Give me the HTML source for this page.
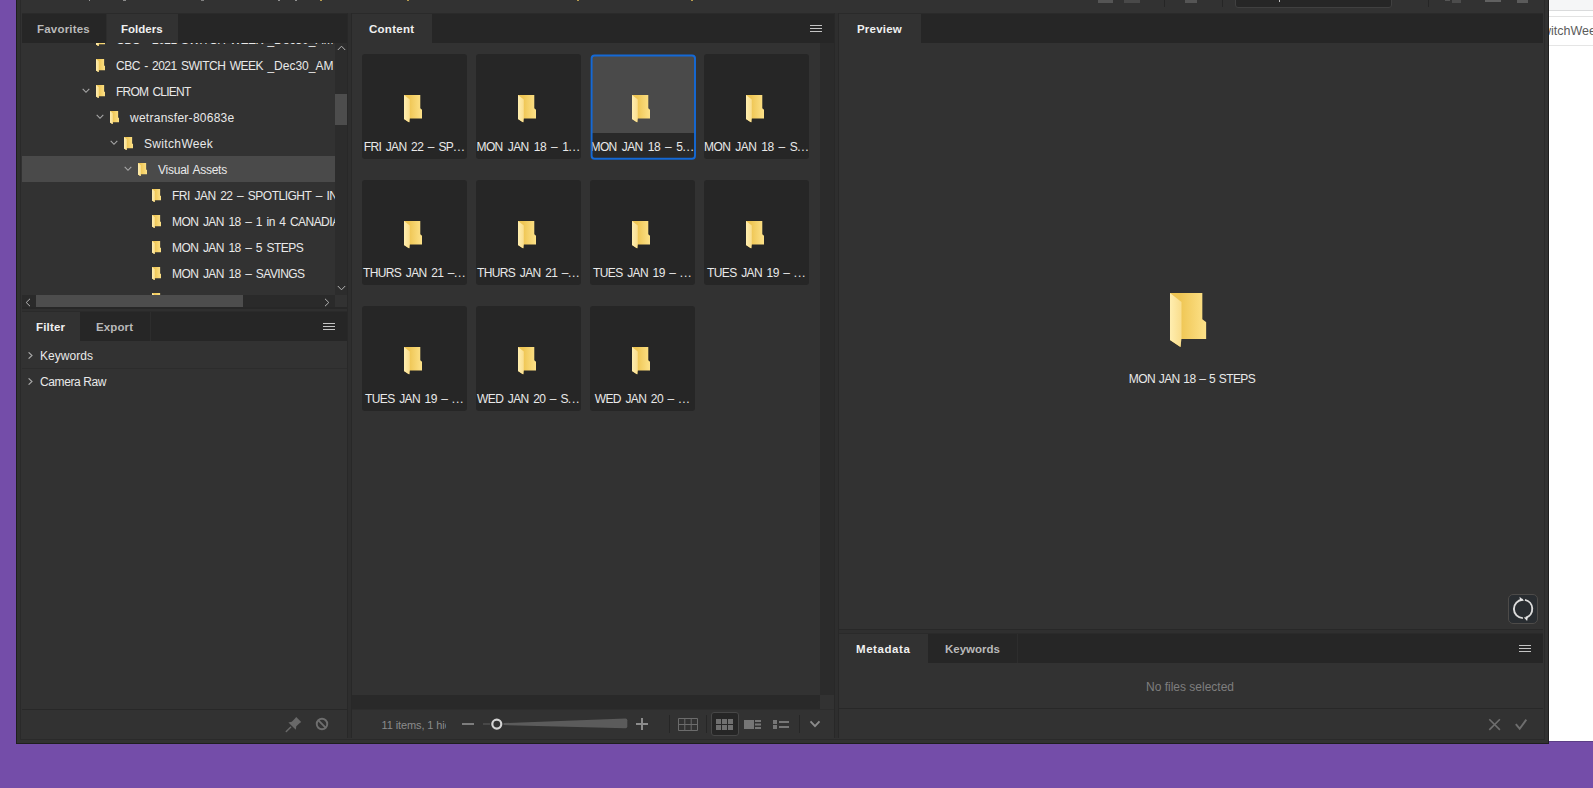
<!DOCTYPE html>
<html><head><meta charset="utf-8"><title>Bridge</title>
<style>
html,body{margin:0;padding:0}
body{width:1593px;height:788px;overflow:hidden;background:#744da9;position:relative;font-family:"Liberation Sans",sans-serif;font-size:12px;color:#dedede}
div,span,svg{position:absolute;box-sizing:border-box}
.tb{background:#262626;height:30px;border-top:1px solid #2a2a2a}
.t{top:0;height:29px;line-height:29px;font-weight:bold;font-size:12px;color:#b9b9b9;white-space:nowrap;border-right:1px solid #2d2d2d}
.t.on{background:#323232;color:#f0f0f0;border-right:none}
.t b{position:absolute;top:5px;line-height:20px;font-weight:bold;font-size:11.5px}
.r{left:22px;width:313px;height:26px;overflow:hidden}
.r i{position:absolute;top:6px;line-height:16px;font-style:normal;white-space:nowrap;color:#e9e9e9}
.c{width:105px;height:105px;background:#262626;border-radius:3px;overflow:hidden}
.c i{position:absolute;left:0;width:105px;top:85px;letter-spacing:-0.6px;word-spacing:1.8px;line-height:16px;text-align:center;font-style:normal;white-space:nowrap;color:#e9e9e9}
.c u{text-decoration:none;letter-spacing:0.7px}
.r u{text-decoration:none;letter-spacing:0}
.h{width:12px;height:7px;border-top:1px solid #c4c4c4;border-bottom:1px solid #c4c4c4}
.h:after{content:"";position:absolute;left:0;right:0;top:2px;height:1px;background:#c4c4c4}
</style></head><body>
<svg width="0" height="0" style="left:0;top:0"><defs>
<linearGradient id="gb" x1="0" x2="1" y1="0" y2="0"><stop offset="0.28" stop-color="#efc654"/><stop offset="1" stop-color="#fde28a"/></linearGradient>
<linearGradient id="gf" x1="0" x2="1" y1="0" y2="0"><stop offset="0" stop-color="#ffeeb0"/><stop offset="1" stop-color="#f9dd8c"/></linearGradient>
<symbol id="fo" viewBox="0 0 18.4 27.6"><path d="M0,0H16.3V13.3L18.3,14.9V23.4H5.3V27.4L0,23.9Z" fill="url(#gb)"/><path d="M0,0L5.8,4.6V23L5.3,27.4L0,23.9Z" fill="url(#gf)"/></symbol>
</defs></svg>

<div style="left:16px;top:0;width:1533px;height:744px;background:#323232;border:1px solid #1f1f1f;border-top:none"></div>
<div style="left:20px;top:0;width:1525px;height:740px;border:1px solid #2a2a2a;border-top:none"></div>
<div style="left:89px;top:0;width:1px;height:1px;background:#9a9a9a"></div>
<div style="left:123px;top:0;width:3px;height:1px;background:#8a8a8a"></div>
<div style="left:201px;top:0;width:3px;height:1px;background:#808080"></div>
<div style="left:278px;top:0;width:2px;height:1px;background:#909090"></div>
<div style="left:295px;top:0;width:2px;height:1px;background:#909090"></div>
<div style="left:320px;top:0;width:2px;height:1px;background:#b79c4e"></div>
<div style="left:407px;top:0;width:2px;height:1px;background:#b79c4e"></div>
<div style="left:577px;top:0;width:2px;height:1px;background:#b79c4e"></div>
<div style="left:691px;top:0;width:2px;height:1px;background:#b79c4e"></div>
<div style="left:1098px;top:0;width:15px;height:3px;background:#555"></div>
<div style="left:1124px;top:0;width:16px;height:3px;background:#494949"></div>
<div style="left:1164px;top:0;width:1px;height:7px;background:#262626"></div>
<div style="left:1185px;top:0;width:12px;height:3px;background:#555"></div>
<div style="left:1222px;top:0;width:1px;height:7px;background:#262626"></div>
<div style="left:1428px;top:0;width:1px;height:7px;background:#262626"></div>
<div style="left:1445px;top:0;width:5px;height:1px;background:#555"></div>
<div style="left:1452px;top:0;width:9px;height:3px;background:#4c4c4c"></div>
<div style="left:1485px;top:0;width:16px;height:2px;background:#616161"></div>
<div style="left:1517px;top:0;width:11px;height:3px;background:#5b5b5b"></div>
<div style="left:1235px;top:-2px;width:157px;height:10px;background:#262626;border:1px solid #404040;border-radius:0 0 3px 3px"></div>
<div style="left:1279px;top:0;width:1px;height:2px;background:#c0c0c0"></div>
<div class="tb" style="left:22px;top:13px;width:326px">
<div class="t" style="left:0px;width:85px"><b style="left:15px;letter-spacing:0.2px">Favorites</b></div>
<div class="t on" style="left:85px;width:71px"><b style="left:14px;letter-spacing:0px">Folders</b></div>
</div>
<div style="left:22px;top:43px;width:313px;height:252px;overflow:hidden">
<div class="r" style="left:0;top:-17px;">
<svg style="left:74px;top:7px" width="9.2" height="13.3" viewBox="0 0 18.4 27.6" preserveAspectRatio="none"><use href="#fo"/></svg>
<i style="left:94px;letter-spacing:-0.5px;word-spacing:1.5px">CBC - 2021 SWITCH WEEK <u>_Dec30_AM</u></i></div>
<div class="r" style="left:0;top:9px;">
<svg style="left:74px;top:7px" width="9.2" height="13.3" viewBox="0 0 18.4 27.6" preserveAspectRatio="none"><use href="#fo"/></svg>
<i style="left:94px;letter-spacing:-0.5px;word-spacing:1.5px">CBC - 2021 SWITCH WEEK <u>_Dec30_AM</u></i></div>
<div class="r" style="left:0;top:35px;">
<svg style="left:60px;top:10px" width="8" height="6" viewBox="0 0 8 6"><path d="M0.7,0.9L4,4.3L7.3,0.9" fill="none" stroke="#a9a9a9" stroke-width="1.1"/></svg>
<svg style="left:74px;top:7px" width="9.2" height="13.3" viewBox="0 0 18.4 27.6" preserveAspectRatio="none"><use href="#fo"/></svg>
<i style="left:94px;letter-spacing:-0.75px;word-spacing:1.5px">FROM CLIENT</i></div>
<div class="r" style="left:0;top:61px;">
<svg style="left:74px;top:10px" width="8" height="6" viewBox="0 0 8 6"><path d="M0.7,0.9L4,4.3L7.3,0.9" fill="none" stroke="#a9a9a9" stroke-width="1.1"/></svg>
<svg style="left:88px;top:7px" width="9.2" height="13.3" viewBox="0 0 18.4 27.6" preserveAspectRatio="none"><use href="#fo"/></svg>
<i style="left:108px;letter-spacing:0.26px;word-spacing:0px">wetransfer-80683e</i></div>
<div class="r" style="left:0;top:87px;">
<svg style="left:88px;top:10px" width="8" height="6" viewBox="0 0 8 6"><path d="M0.7,0.9L4,4.3L7.3,0.9" fill="none" stroke="#a9a9a9" stroke-width="1.1"/></svg>
<svg style="left:102px;top:7px" width="9.2" height="13.3" viewBox="0 0 18.4 27.6" preserveAspectRatio="none"><use href="#fo"/></svg>
<i style="left:122px;letter-spacing:0.34px;word-spacing:0px">SwitchWeek</i></div>
<div class="r" style="left:0;top:113px; background:#4a4a4a;">
<svg style="left:102px;top:10px" width="8" height="6" viewBox="0 0 8 6"><path d="M0.7,0.9L4,4.3L7.3,0.9" fill="none" stroke="#a9a9a9" stroke-width="1.1"/></svg>
<svg style="left:116px;top:7px" width="9.2" height="13.3" viewBox="0 0 18.4 27.6" preserveAspectRatio="none"><use href="#fo"/></svg>
<i style="left:136px;letter-spacing:-0.25px;word-spacing:1px">Visual Assets</i></div>
<div class="r" style="left:0;top:139px;">
<svg style="left:130px;top:7px" width="9.2" height="13.3" viewBox="0 0 18.4 27.6" preserveAspectRatio="none"><use href="#fo"/></svg>
<i style="left:150px;letter-spacing:-0.5px;word-spacing:1.75px">FRI JAN 22 – SPOTLIGHT – INSURANCE</i></div>
<div class="r" style="left:0;top:165px;">
<svg style="left:130px;top:7px" width="9.2" height="13.3" viewBox="0 0 18.4 27.6" preserveAspectRatio="none"><use href="#fo"/></svg>
<i style="left:150px;letter-spacing:-0.55px;word-spacing:1.75px">MON JAN 18 – 1 in 4 CANADIANS</i></div>
<div class="r" style="left:0;top:191px;">
<svg style="left:130px;top:7px" width="9.2" height="13.3" viewBox="0 0 18.4 27.6" preserveAspectRatio="none"><use href="#fo"/></svg>
<i style="left:150px;letter-spacing:-0.55px;word-spacing:1.75px">MON JAN 18 – 5 STEPS</i></div>
<div class="r" style="left:0;top:217px;">
<svg style="left:130px;top:7px" width="9.2" height="13.3" viewBox="0 0 18.4 27.6" preserveAspectRatio="none"><use href="#fo"/></svg>
<i style="left:150px;letter-spacing:-0.55px;word-spacing:1.75px">MON JAN 18 – SAVINGS</i></div>
<div class="r" style="left:0;top:243px;">
<svg style="left:130px;top:7px" width="9.2" height="13.3" viewBox="0 0 18.4 27.6" preserveAspectRatio="none"><use href="#fo"/></svg>
<i style="left:150px;letter-spacing:-0.55px;word-spacing:1.75px">THURS JAN 21</i></div>
</div>
<div style="left:335px;top:43px;width:13px;height:252px;background:#2c2c2c"></div>
<div style="left:335px;top:94px;width:12px;height:31px;background:#4d4d4d"></div>
<svg style="left:337px;top:45px" width="9" height="6" viewBox="0 0 9 6"><path d="M0.8,5L4.5,1.2L8.2,5" fill="none" stroke="#b5b5b5" stroke-width="1"/></svg>
<svg style="left:337px;top:285px" width="9" height="6" viewBox="0 0 9 6"><path d="M0.8,1L4.5,4.8L8.2,1" fill="none" stroke="#b5b5b5" stroke-width="1"/></svg>
<div style="left:22px;top:295px;width:313px;height:12px;background:#2a2a2a"></div>
<div style="left:36px;top:295px;width:207px;height:12px;background:#4d4d4d"></div>
<svg style="left:25px;top:298px" width="6" height="9" viewBox="0 0 6 9"><path d="M5,0.8L1.2,4.5L5,8.2" fill="none" stroke="#b5b5b5" stroke-width="1"/></svg>
<svg style="left:324px;top:298px" width="6" height="9" viewBox="0 0 6 9"><path d="M1,0.8L4.8,4.5L1,8.2" fill="none" stroke="#b5b5b5" stroke-width="1"/></svg>
<div style="left:22px;top:307px;width:326px;height:2px;background:#272727"></div>
<div style="left:22px;top:309px;width:326px;height:2px;background:#2f2f2f"></div>
<div class="tb" style="left:22px;top:311px;width:326px">
<div class="t on" style="left:0px;width:58px"><b style="left:14px;letter-spacing:0.18px">Filter</b></div>
<div class="t" style="left:58px;width:71px"><b style="left:16px;letter-spacing:0.12px">Export</b></div>
<div class="h" style="left:301px;top:11px"></div>
</div>
<svg style="left:28px;top:352px" width="5" height="7" viewBox="0 0 5 7"><path d="M0.6,0.3L4,3.5L0.6,6.7" fill="none" stroke="#a9a9a9" stroke-width="1.1"/></svg>
<span style="left:40px;top:348px;line-height:16px;white-space:nowrap;letter-spacing:0.03px;color:#e9e9e9">Keywords</span>
<svg style="left:28px;top:378px" width="5" height="7" viewBox="0 0 5 7"><path d="M0.6,0.3L4,3.5L0.6,6.7" fill="none" stroke="#a9a9a9" stroke-width="1.1"/></svg>
<span style="left:40px;top:374px;line-height:16px;white-space:nowrap;letter-spacing:-0.4px;color:#e9e9e9">Camera Raw</span>
<div style="left:22px;top:368px;width:326px;height:1px;background:#2c2c2c"></div>
<div style="left:22px;top:709px;width:326px;height:1px;background:#282828"></div>
<svg style="left:284px;top:714px" width="20" height="20" viewBox="284 714 20 20"><path d="M288.4,722.4L291.8,721.7L295,718.5L296.2,716.9L301.2,722L299.5,723.3L296.3,726.3L295.8,729.7Z" fill="#696969"/><path d="M286.3,731.5L290.6,727.3" stroke="#696969" stroke-width="1.5" stroke-linecap="round"/></svg>
<svg style="left:314px;top:716px" width="16" height="16" viewBox="0 0 16 16"><circle cx="8" cy="8" r="5.25" fill="none" stroke="#6e6e6e" stroke-width="1.9"/><path d="M4.2,4.2L11.8,11.8" stroke="#6e6e6e" stroke-width="1.9"/></svg>
<div style="left:347px;top:13px;width:5px;height:725px;background:#2e2e2e;border-left:1px solid #282828;border-right:1px solid #282828"></div>
<div style="left:834px;top:13px;width:5px;height:725px;background:#2e2e2e;border-left:1px solid #282828;border-right:1px solid #282828"></div>
<div class="tb" style="left:352px;top:13px;width:482px">
<div class="t on" style="left:0px;width:80px"><b style="left:17px;letter-spacing:0.26px">Content</b></div>
<div class="h" style="left:458px;top:11px"></div>
</div>
<div class="c" style="left:362px;top:54px"><svg style="left:42px;top:41px" width="18.4" height="27.6"><use href="#fo"/></svg><i style="top:85px">FRI JAN 22 – SP<u>...</u></i></div>
<div class="c" style="left:476px;top:54px"><svg style="left:42px;top:41px" width="18.4" height="27.6"><use href="#fo"/></svg><i style="top:85px;word-spacing:2.4px">MON JAN 18 – 1<u>...</u></i></div>
<div class="c" style="left:591px;top:55px;width:105px;height:105px;background:#4a4a4a;border-radius:4px"><div style="left:0;top:78px;width:105px;height:27px;background:#292929;border-radius:2px 2px 0 0"></div><svg style="left:41px;top:40px" width="18.4" height="27.6"><use href="#fo"/></svg><i style="left:-1px;top:84px;word-spacing:2.4px">MON JAN 18 – 5<u>...</u></i></div>
<svg style="left:588px;top:52px" width="110" height="110" viewBox="588 52 110 110"><rect x="591.6" y="55.5" width="103.4" height="103.3" rx="3" fill="none" stroke="#1469d6" stroke-width="1.9"/></svg>
<div class="c" style="left:704px;top:54px"><svg style="left:42px;top:41px" width="18.4" height="27.6"><use href="#fo"/></svg><i style="top:85px;word-spacing:2.4px">MON JAN 18 – S<u>...</u></i></div>
<div class="c" style="left:362px;top:180px"><svg style="left:42px;top:41px" width="18.4" height="27.6"><use href="#fo"/></svg><i style="top:85px">THURS JAN 21 –<u>...</u></i></div>
<div class="c" style="left:476px;top:180px"><svg style="left:42px;top:41px" width="18.4" height="27.6"><use href="#fo"/></svg><i style="top:85px">THURS JAN 21 –<u>...</u></i></div>
<div class="c" style="left:590px;top:180px"><svg style="left:42px;top:41px" width="18.4" height="27.6"><use href="#fo"/></svg><i style="top:85px">TUES JAN 19 – <u>...</u></i></div>
<div class="c" style="left:704px;top:180px"><svg style="left:42px;top:41px" width="18.4" height="27.6"><use href="#fo"/></svg><i style="top:85px">TUES JAN 19 – <u>...</u></i></div>
<div class="c" style="left:362px;top:306px"><svg style="left:42px;top:41px" width="18.4" height="27.6"><use href="#fo"/></svg><i style="top:85px">TUES JAN 19 – <u>...</u></i></div>
<div class="c" style="left:476px;top:306px"><svg style="left:42px;top:41px" width="18.4" height="27.6"><use href="#fo"/></svg><i style="top:85px">WED JAN 20 – S<u>...</u></i></div>
<div class="c" style="left:590px;top:306px"><svg style="left:42px;top:41px" width="18.4" height="27.6"><use href="#fo"/></svg><i style="top:85px">WED JAN 20 – <u>...</u></i></div>
<div style="left:820px;top:43px;width:14px;height:652px;background:#2b2b2b"></div>
<div style="left:352px;top:695px;width:468px;height:14px;background:#292929"></div>
<div style="left:352px;top:709px;width:482px;height:1px;background:#2d2d2d"></div>
<div style="left:381px;top:716px;width:65px;height:18px;overflow:hidden"><span style="left:0.5px;top:1px;line-height:16px;font-size:11px;color:#8b8b8b;white-space:nowrap;letter-spacing:-0.1px">11 items, 1 hidden</span></div>
<div style="left:462px;top:723px;width:12px;height:2px;background:#7d7d7d"></div>
<div style="left:483px;top:723px;width:7px;height:2px;background:#484848"></div>
<svg style="left:490px;top:716px" width="140" height="16" viewBox="490 716 140 16"><path d="M503.5,723.1L625.5,718.5Q627.3,718.5 627.3,720.3V726.4Q627.3,728.2 625.5,728.2L503.5,725.1Z" fill="#5b5b5b"/><circle cx="496.8" cy="724.1" r="4.5" fill="#323232" stroke="#d4d4d4" stroke-width="2.2"/></svg>
<div style="left:636px;top:723px;width:12px;height:2px;background:#8c8c8c"></div><div style="left:641px;top:718px;width:2px;height:12px;background:#8c8c8c"></div>
<div style="left:669px;top:715px;width:1px;height:18px;background:#262626"></div>
<div style="left:706px;top:715px;width:1px;height:18px;background:#262626"></div>
<div style="left:799px;top:715px;width:1px;height:18px;background:#262626"></div>
<svg style="left:677px;top:717px" width="22" height="15" viewBox="677 717 22 15"><path d="M678.5,718.5H697.5V730.5H678.5ZM678.5,724.5H697.5M684.8,718.5V730.5M691.2,718.5V730.5" fill="none" stroke="#6c6c6c" stroke-width="1"/></svg>
<div style="left:711px;top:712px;width:28px;height:24px;background:#262626;border:1px solid #474747;border-radius:3px"></div>
<svg style="left:715px;top:718px" width="20" height="13" viewBox="715 718 20 13"><path d="M716,719h5v5h-5zM722,719h5v5h-5zM728,719h5v5h-5zM716,725h5v5h-5zM722,725h5v5h-5zM728,725h5v5h-5z" fill="#707070"/></svg>
<svg style="left:743px;top:718px" width="20" height="13" viewBox="743 718 20 13"><path d="M744,720h10v9h-10zM755,720h6v2h-6zM755,723.5h6v2h-6zM755,727h6v2h-6z" fill="#767676"/></svg>
<svg style="left:771px;top:718px" width="20" height="13" viewBox="771 718 20 13"><path d="M773,720h4v4h-4zM773,725h4v4h-4zM779,721h10v2h-10zM779,726h10v2h-10z" fill="#767676"/></svg>
<svg style="left:808px;top:718px" width="14" height="12" viewBox="808 718 14 12"><path d="M810.5,721.3L815,726.2L819.5,721.3" fill="none" stroke="#8c8c8c" stroke-width="1.9"/></svg>
<div class="tb" style="left:839px;top:13px;width:704px">
<div class="t on" style="left:0px;width:82px"><b style="left:18px;letter-spacing:0.2px">Preview</b></div>
</div>
<svg style="left:1170px;top:292.6px" width="36.5" height="54.3" viewBox="0 0 18.4 27.6" preserveAspectRatio="none"><use href="#fo"/></svg>
<span style="left:1092px;top:371px;width:200px;text-align:center;line-height:16px;letter-spacing:-0.6px;word-spacing:1px;color:#e9e9e9;white-space:nowrap">MON JAN 18 – 5 STEPS</span>
<div style="left:1508px;top:594px;width:30px;height:30px;background:#292d31;border:1px solid #4d4b49;border-radius:5px"></div>
<svg style="left:1508px;top:594px" width="30" height="30" viewBox="0 0 30 30"><g fill="none" stroke="#dcdcdc" stroke-width="1.9"><path d="M14.73,5.71A9.2,9.2 0 0 0 14.9,24.1"/><path d="M16.96,5.9A9.2,9.2 0 0 1 17.89,23.65"/></g><path d="M11.5,2.85L16.05,6.4L12.2,6.9Z M15.8,23.4L19.85,22.9L19.1,26.96Z" fill="#e6e6e6"/></svg>
<div style="left:839px;top:629px;width:704px;height:1px;background:#282828"></div>
<div style="left:839px;top:630px;width:704px;height:3px;background:#2f2f2f"></div>
<div class="tb" style="left:839px;top:633px;width:704px">
<div class="t on" style="left:0px;width:89px"><b style="left:17px;letter-spacing:0.57px">Metadata</b></div>
<div class="t" style="left:89px;width:90px"><b style="left:17px;letter-spacing:0px">Keywords</b></div>
<div class="h" style="left:680px;top:11px"></div>
</div>
<span style="left:1090px;top:679px;width:200px;text-align:center;line-height:16px;color:#7e7e7e;white-space:nowrap">No files selected</span>
<div style="left:839px;top:708px;width:704px;height:1px;background:#282828"></div>
<svg style="left:1487px;top:717px" width="42" height="15" viewBox="1487 717 42 15"><g fill="none" stroke="#6e6e6e" stroke-width="1.6"><path d="M1489.3,719.3L1499.9,729.9M1499.9,719.3L1489.3,729.9"/><path d="M1515.8,724.1L1519.7,728.7L1526.3,719.6" stroke-width="1.9"/></g></svg>
<div style="left:1549px;top:0;width:44px;height:741px;background:#fff;overflow:hidden"><div style="left:0;top:0;width:44px;height:10px;background:#f5f6f7"></div><div style="left:0;top:10px;width:44px;height:1px;background:#dadbdc"></div><div style="left:0;top:16px;width:44px;height:1px;background:#e3e3e3"></div><div style="left:0;top:45px;width:44px;height:1px;background:#e5e5e5"></div><span style="left:-15.3px;top:22px;line-height:18px;font-size:12.5px;color:#5c5c5c;white-space:nowrap">SwitchWeek</span></div>
<div style="left:1549px;top:741px;width:44px;height:1px;background:#5c3f86"></div>
</body></html>
